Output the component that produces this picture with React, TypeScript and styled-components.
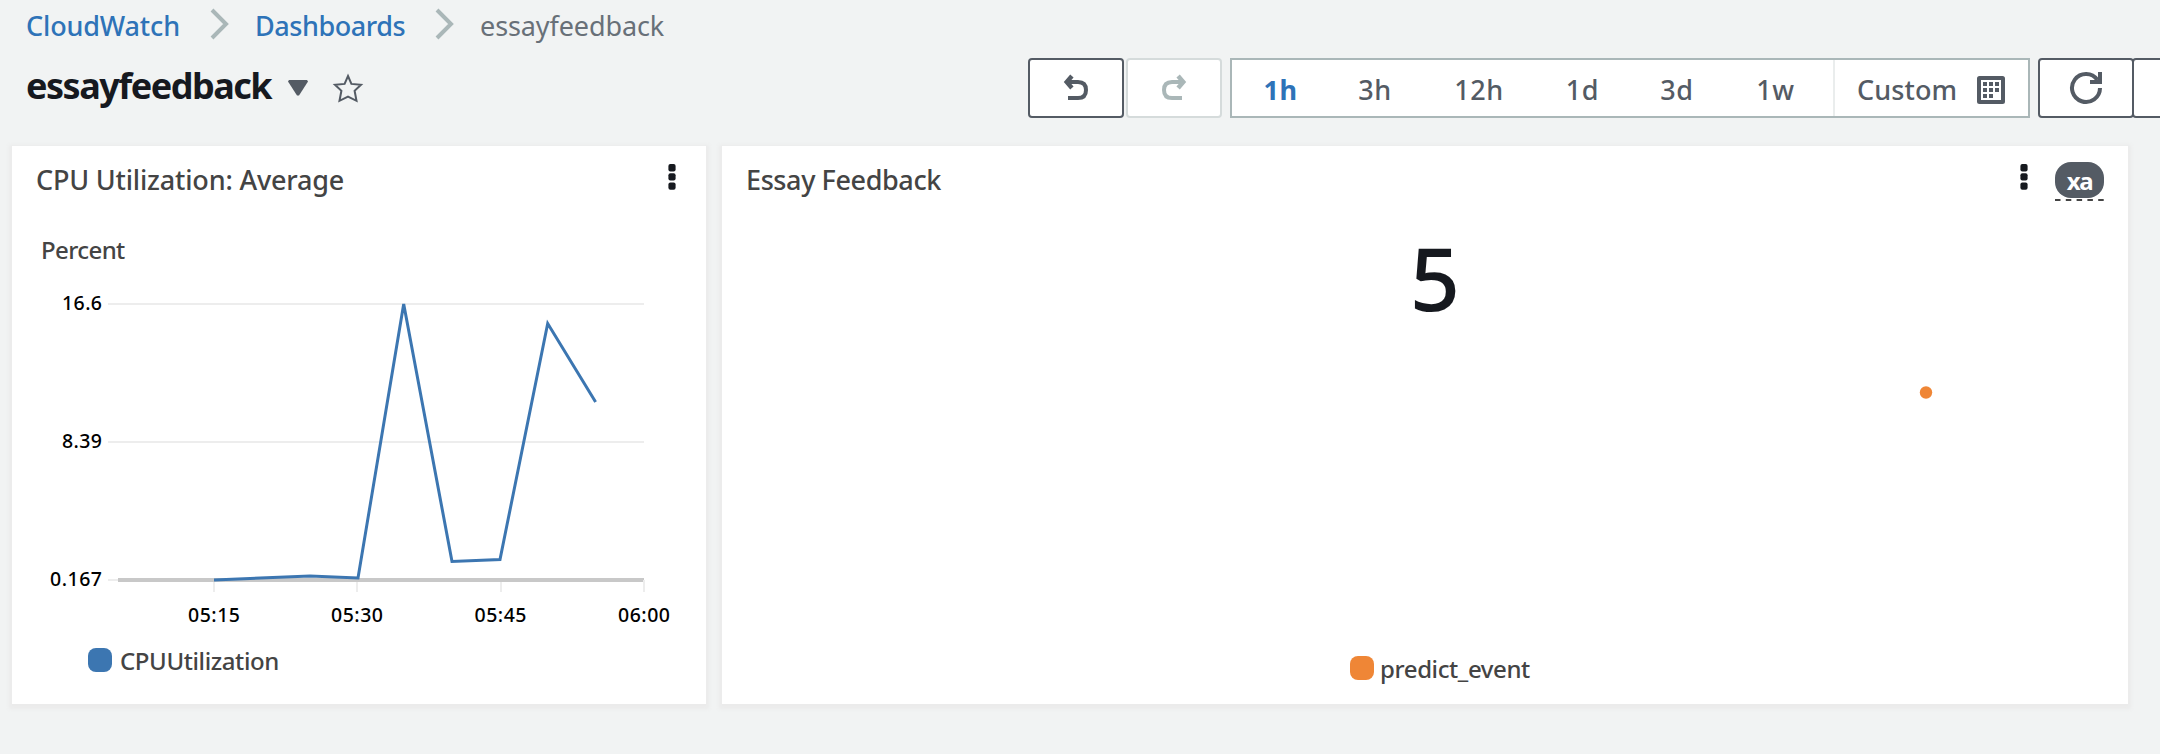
import React from "react";
import styled, { createGlobalStyle } from "styled-components";

const GlobalStyle = createGlobalStyle`
  *, *::before, *::after { box-sizing: border-box; }
  body {
    margin: 0;
    background: #f1f3f3;
    font-family: "Noto Sans", "Open Sans", sans-serif;
    overflow: hidden;
  }
`;

const Page = styled.div`
  height: 754px;
  width: 100%;
  overflow: hidden;
  display: flex;
  flex-direction: column;
`;

const Breadcrumbs = styled.nav`
  display: flex;
  align-items: flex-start;
  height: 54px;
  padding: 6px 0 0 26px;
  font-size: 27px;
  line-height: 40px;
  white-space: nowrap;
`;

const Crumb = styled.span<{ $w: number; $link?: boolean; $ls?: number }>`
  width: ${(p) => p.$w}px;
  color: ${(p) => (p.$link ? "#2e73b8" : "#687078")};
  font-weight: ${(p) => (p.$link ? 500 : 450)};
  letter-spacing: ${(p) => p.$ls ?? 0}px;
`;

const Chevron = styled.svg`
  flex: none;
  width: 20px;
  height: 32px;
  margin: 2px 26px 0 30px;
`;

const Header = styled.header`
  display: flex;
  justify-content: space-between;
  height: 92px;
  padding-left: 26px;
`;

const TitleGroup = styled.div`
  display: flex;
  height: 68px;
`;

const Title = styled.h1`
  margin: 7px 0 0;
  width: 262px;
  font-size: 36px;
  font-weight: 700;
  line-height: 50px;
  letter-spacing: -1.5px;
  color: #16191f;
`;

const Caret = styled.svg`
  width: 20px;
  height: 16px;
  margin-top: 26px;
`;

const Star = styled.svg`
  width: 34px;
  height: 34px;
  margin: 17px 0 0 23px;
`;

const Toolbar = styled.div`
  display: flex;
  flex: none;
  width: 1132px;
  height: 60px;
  margin-top: 4px;
  overflow: hidden;
`;

const ToolButton = styled.button<{ $muted?: boolean; $before?: number }>`
  display: flex;
  flex: none;
  align-items: center;
  justify-content: center;
  width: 96px;
  height: 60px;
  margin-left: ${(p) => p.$before ?? 0}px;
  padding: 0;
  background: #fff;
  border: 2px solid ${(p) => (p.$muted ? "#d5dbdb" : "#545b64")};
  border-radius: 4px;
  color: ${(p) => (p.$muted ? "#aab7b8" : "#545b64")};
`;

const RangePicker = styled.div`
  display: flex;
  flex: none;
  width: 800px;
  height: 60px;
  margin-left: 8px;
  padding-left: 1px;
  background: #fff;
  border: 2px solid #aab7b8;
`;

const Range = styled.span<{ $w: number; $active?: boolean }>`
  width: ${(p) => p.$w}px;
  text-align: center;
  font-size: 27px;
  line-height: 59px;
  letter-spacing: 0.6px;
  font-weight: ${(p) => (p.$active ? 700 : 500)};
  color: ${(p) => (p.$active ? "#2e73b8" : "#545b64")};
`;

const CustomRange = styled.div`
  display: flex;
  flex: 1;
  margin-left: 7px;
  padding-left: 22px;
  border-left: 2px solid #eaeded;
  font-size: 27px;
  font-weight: 500;
  line-height: 59px;
  color: #545b64;
`;

const CustomLabel = styled.span`
  width: 120px;
  letter-spacing: 0.1px;
`;

const Calendar = styled.svg`
  width: 28px;
  height: 28px;
  margin-top: 16px;
`;

const Widgets = styled.main`
  display: flex;
  gap: 16px;
  padding-left: 12px;
`;

const Card = styled.section<{ $w: number }>`
  display: flex;
  flex-direction: column;
  flex: none;
  width: ${(p) => p.$w}px;
  height: 558px;
  background: #fff;
  box-shadow: 0 2px 4px 3px #ebebeb;
`;

const CardHeader = styled.div`
  display: flex;
  height: 70px;
  padding: 14px 24px 0 24px;
`;

const CardTitle = styled.h2<{ $ls?: number }>`
  flex: 1;
  margin: 0;
  font-size: 27px;
  font-weight: 500;
  line-height: 40px;
  letter-spacing: ${(p) => p.$ls ?? 0}px;
  color: #444;
`;

const Kebab = styled.svg<{ $after: number }>`
  width: 8px;
  height: 28px;
  margin: 4px ${(p) => p.$after}px 0 0;
`;

const BadgeWrap = styled.div`
  width: 49px;
  height: 41px;
  margin-top: 2px;
`;

const Badge = styled.div`
  height: 36px;
  border-radius: 16px;
  background: #545b64;
  color: #fff;
  font-size: 24px;
  font-weight: 700;
  line-height: 37px;
  text-align: center;
  letter-spacing: -1.4px;
`;

const BadgeRule = styled.svg`
  display: block;
  width: 49px;
  height: 2px;
  margin-top: 1px;
`;

const UnitLabel = styled.div`
  height: 42px;
  margin: 16px 0 0 29px;
  font-size: 24px;
  font-weight: 500;
  line-height: 36px;
  letter-spacing: -0.6px;
  color: #444;
`;

const Chart = styled.svg`
  display: block;
  width: 694px;
  height: 370px;
  font-size: 19.5px;
  font-weight: 500;
`;

const Legend = styled.div<{ $left: number; $ls: number }>`
  display: flex;
  align-items: center;
  height: 32px;
  padding-left: ${(p) => p.$left}px;
  font-size: 24px;
  font-weight: 500;
  letter-spacing: ${(p) => p.$ls}px;
  color: #444;
`;

const Swatch = styled.span<{ $color: string; $gap: number }>`
  width: 24px;
  height: 24px;
  margin-right: ${(p) => p.$gap}px;
  border-radius: 8px;
  background: ${(p) => p.$color};
`;

const BigNumber = styled.div`
  height: 128px;
  padding-left: 20px;
  text-align: center;
  font-size: 88px;
  font-weight: 500;
  line-height: 123px;
  color: #16191f;
`;

const DotPlot = styled.svg`
  display: block;
  width: 1406px;
  height: 308px;
`;

const CrumbArrow = () => (
  <Chevron viewBox="0 0 20 32">
    <path d="M3 2 L17 16 L3 30" fill="none" stroke="#aab7b8" strokeWidth="4" />
  </Chevron>
);

const BackArrow = ({ flip }: { flip?: boolean }) => (
  <svg width="26" height="32" viewBox="0 0 26 32">
    <g
      transform={flip ? "translate(26 0) scale(-1 1)" : undefined}
      fill="none"
      stroke="currentColor"
      strokeWidth="4"
    >
      <path d="M4 10 H15 C20.5 10 23 12.8 23 18 C23 23.2 20.5 26 15 26 H5" />
      <path d="M8.9 4 L3.7 10 L8.9 16" strokeWidth="4.4" />
    </g>
  </svg>
);

const RefreshIcon = () => (
  <svg width="34" height="40" viewBox="0 0 34 40">
    <path
      d="M31 20 A14 14 0 1 1 28.5 12"
      fill="none"
      stroke="currentColor"
      strokeWidth="4"
    />
    <path d="M31 4 V14 H21" fill="none" stroke="currentColor" strokeWidth="4" />
  </svg>
);

const Dots = ({ after }: { after: number }) => (
  <Kebab $after={after} viewBox="0 0 8 28">
    {[0, 9.2, 18.4].map((y) => (
      <rect key={y} x="0.4" y={y} width="7.2" height="7.4" rx="2" fill="#16191f" />
    ))}
  </Kebab>
);

const yLabels: [string, number, number][] = [
  ["16.6", 30, 40],
  ["8.39", 168, 40],
  ["0.167", 306, 52],
];
const xLabels: [string, number][] = [
  ["05:15", 202],
  ["05:30", 345],
  ["05:45", 488.5],
  ["06:00", 632],
];

export default function App() {
  return (
    <>
      <GlobalStyle />
      <Page>
        <Breadcrumbs>
          <Crumb $w={153} $link $ls={-0.15}>CloudWatch</Crumb>
          <CrumbArrow />
          <Crumb $w={149} $link $ls={-0.45}>Dashboards</Crumb>
          <CrumbArrow />
          <Crumb $w={200} $ls={-0.1}>essayfeedback</Crumb>
        </Breadcrumbs>
        <Header>
          <TitleGroup>
            <Title>essayfeedback</Title>
            <Caret viewBox="0 0 20 16">
              <path d="M1 0 H19 L20 1.5 L11 15.5 H9 L0 1.5 Z" fill="#545b64" />
            </Caret>
            <Star viewBox="0 0 34 34">
              <path
                d="M17 5 L20.4 12.9 L30 13.8 L23.6 19.8 L25.5 29.8 L17 25.6 L8.5 29.8 L10.4 19.8 L4 13.8 L13.6 12.9 Z"
                fill="none"
                stroke="#545b64"
                strokeWidth="2"
              />
            </Star>
          </TitleGroup>
          <Toolbar>
            <ToolButton aria-label="Undo"><BackArrow /></ToolButton>
            <ToolButton aria-label="Redo" $muted $before={2}><BackArrow flip /></ToolButton>
            <RangePicker>
              <Range $w={95} $active>1h</Range>
              <Range $w={94}>3h</Range>
              <Range $w={114}>12h</Range>
              <Range $w={93}>1d</Range>
              <Range $w={96}>3d</Range>
              <Range $w={101}>1w</Range>
              <CustomRange>
                <CustomLabel>Custom</CustomLabel>
                <Calendar viewBox="0 0 28 28">
                  <rect x="2" y="2" width="24" height="24" rx="0.5" fill="none" stroke="#545b64" strokeWidth="4" />
                  {[
                    [6, 6], [12, 6], [18, 6],
                    [6, 12], [12, 12], [18, 12],
                    [6, 18], [12, 18],
                  ].map(([x, y]) => (
                    <rect key={`${x}-${y}`} x={x} y={y} width="4" height="4" fill="#545b64" />
                  ))}
                </Calendar>
              </CustomRange>
            </RangePicker>
            <ToolButton aria-label="Refresh" $before={8}><RefreshIcon /></ToolButton>
            <ToolButton aria-label="Refresh options" $before={-2} />
          </Toolbar>
        </Header>
        <Widgets>
          <Card $w={694}>
            <CardHeader>
              <CardTitle $ls={-0.18}>CPU Utilization: Average</CardTitle>
              <Dots after={6} />
            </CardHeader>
            <UnitLabel>Percent</UnitLabel>
            <Chart viewBox="0 0 694 370">
              <path d="M96 30 H632 M96 168 H632 M96 306 H106" stroke="#ededed" strokeWidth="2" />
              <path d="M106 306 H632" stroke="#c8c8c8" strokeWidth="4" />
              <path d="M202 308 V318 M345 308 V318 M489 308 V318 M632 306 V318" stroke="#ededed" strokeWidth="2" />
              <path
                d="M202 306 L298 302 L346 304 L391.7 30 L440 287.5 L488 285.5 L535.7 49.5 L583.6 128"
                fill="none"
                stroke="#3c76b1"
                strokeWidth="3"
              />
              {yLabels.map(([t, y, w]) => (
                <text key={t} x={90} y={y + 6} textAnchor="end" textLength={w}>{t}</text>
              ))}
              {xLabels.map(([t, x]) => (
                <text key={t} x={x} y={348} textAnchor="middle" textLength={52}>{t}</text>
              ))}
            </Chart>
            <Legend $left={76} $ls={-0.4}>
              <Swatch $color="#3c76b1" $gap={8} />
              CPUUtilization
            </Legend>
          </Card>
          <Card $w={1406}>
            <CardHeader>
              <CardTitle $ls={-0.4}>Essay Feedback</CardTitle>
              <Dots after={27} />
              <BadgeWrap>
                <Badge>xa</Badge>
                <BadgeRule viewBox="0 0 49 2">
                  <path d="M0 1 H49" stroke="#444" strokeWidth="2" strokeDasharray="5.5 5.3" />
                </BadgeRule>
              </BadgeWrap>
            </CardHeader>
            <BigNumber>5</BigNumber>
            <DotPlot viewBox="0 0 1406 308">
              <circle cx="1204" cy="48.5" r="6.2" fill="#ef8636" />
            </DotPlot>
            <Legend $left={628} $ls={-0.4}>
              <Swatch $color="#ef8636" $gap={6} />
              predict_event
            </Legend>
          </Card>
        </Widgets>
      </Page>
    </>
  );
}
